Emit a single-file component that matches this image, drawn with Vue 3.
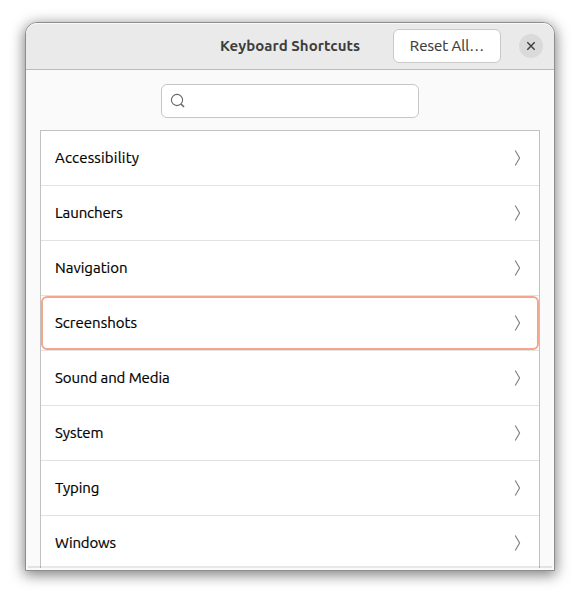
<script setup>
import { ref } from 'vue'

const query = ref('')
const selected = ref('Screenshots')
const categories = [
  { name: 'Accessibility', tracking: 0.19 },
  { name: 'Launchers', tracking: -0.1 },
  { name: 'Navigation', tracking: 0 },
  { name: 'Screenshots', tracking: 0 },
  { name: 'Sound and Media', tracking: -0.08 },
  { name: 'System', tracking: 0 },
  { name: 'Typing', tracking: -0.1 },
  { name: 'Windows', tracking: -0.18 }
]
</script>

<template>
  <main class="desktop">
    <section class="window">
      <header class="titlebar">
        <h1 class="title">Keyboard Shortcuts</h1>
        <button class="reset"><span>Reset All…</span></button>
        <button class="close" aria-label="Close">
          <svg width="10" height="10" viewBox="0 0 10 10">
            <path d="M1.3 1.3 8.7 8.7M8.7 1.3 1.3 8.7" fill="none" stroke="#3d3d3d" stroke-width="1.4" />
          </svg>
        </button>
      </header>
      <div class="content">
        <label class="search">
          <svg width="16" height="16" viewBox="0 0 16 16" fill="none" stroke="#666">
            <circle cx="7" cy="7" r="5.6" stroke-width="1.1" />
            <path d="M11 11 14 14" stroke-width="1.6" />
          </svg>
          <input v-model="query" type="text" aria-label="Search" />
        </label>
        <ul class="list">
          <li
            v-for="item in categories"
            :key="item.name"
            class="row"
            :class="{ focused: item.name === selected }"
            @click="selected = item.name"
          >
            <span class="label" :style="{ letterSpacing: item.tracking + 'px' }">{{ item.name }}</span>
            <svg class="chevron" width="8" height="16" viewBox="0 0 8 16">
              <path d="M1.2 0.5 5.6 8 1.2 15.5" fill="none" stroke="#7c7c7c" stroke-width="1.1" />
            </svg>
          </li>
        </ul>
      </div>
    </section>
  </main>
</template>

<style>
body {
  background: #fff;
  overflow: hidden;
}
</style>

<style scoped>
.desktop {
  box-sizing: border-box;
  width: 580px;
  height: 599px;
  padding: 22px 25px 28px;
  overflow: hidden;
  background: #fff;
  font-family: Ubuntu, 'Noto Sans', sans-serif;
}
.window {
  box-sizing: border-box;
  width: 530px;
  height: 549px;
  border: 1px solid #8e8e8e;
  border-radius: 12px 12px 0 0;
  overflow: hidden;
  background: #fafafa;
  box-shadow: 0 3px 14px 1px rgba(0, 0, 0, 0.5);
}
.titlebar {
  box-sizing: border-box;
  height: 47px;
  display: flex;
  align-items: center;
  justify-content: flex-end;
  padding-right: 11px;
  background: #eaeaea;
  border-bottom: 1px solid #bcbcbc;
  border-radius: 11px 11px 0 0;
  box-shadow: inset 0 1px #f8f8f8;
}
.title {
  margin: 0 33px 0 0;
  width: 140px;
  font-size: 15px;
  line-height: 20px;
  font-weight: 700;
  letter-spacing: 0.05px;
  color: #3d3d3d;
  white-space: nowrap;
}
button {
  font: inherit;
  padding: 0;
}
.reset {
  box-sizing: border-box;
  width: 108px;
  height: 34px;
  margin-right: 18px;
  border: 1px solid #c9c9c9;
  border-radius: 6px;
  background: #fff;
  color: #3d3d3d;
  font-size: 15px;
  line-height: 20px;
  white-space: nowrap;
  -webkit-text-stroke: 0.2px #3d3d3d;
}
.close {
  width: 24px;
  height: 24px;
  display: flex;
  align-items: center;
  justify-content: center;
  border: 0;
  border-radius: 50%;
  background: #dadada;
}
.content {
  position: relative;
  height: 500px;
  display: flex;
  flex-direction: column;
}
/* Edge of the scrolled area, drawn over the clipped list */
.content::after {
  content: '';
  position: absolute;
  left: 2px;
  right: 2px;
  bottom: 2px;
  height: 2px;
  background: rgba(0, 0, 0, 0.09);
}
.search {
  box-sizing: border-box;
  flex: none;
  width: 258px;
  height: 34px;
  margin: 14px 0 12px 135px;
  padding: 0 8px;
  display: flex;
  align-items: center;
  gap: 6px;
  border: 1px solid #c6c6c6;
  border-radius: 6px;
  background: #fff;
}
.search input {
  flex: 1;
  min-width: 0;
  border: 0;
  outline: 0;
  background: transparent;
  font: inherit;
  font-size: 15px;
}
.list {
  box-sizing: border-box;
  flex: none;
  width: 500px;
  height: 438px;
  margin: 0 14px;
  padding: 0;
  list-style: none;
  overflow: hidden;
  background: #fff;
  border: 1px solid #c1c1c1;
  border-bottom: 0;
}
.row {
  box-sizing: border-box;
  height: 55px;
  padding: 0 17px 0 14px;
  display: flex;
  align-items: center;
  justify-content: space-between;
  border-bottom: 1px solid #e2e2e2;
}
.row.focused {
  position: relative;
}
.row.focused::after {
  content: '';
  position: absolute;
  inset: 0;
  border: 2px solid #f4a68c;
  border-radius: 6px;
}
.label {
  font-size: 15px;
  line-height: 20px;
  color: #000;
  white-space: nowrap;
  -webkit-text-stroke: 0.2px #000;
}
.chevron {
  flex: none;
}
</style>
